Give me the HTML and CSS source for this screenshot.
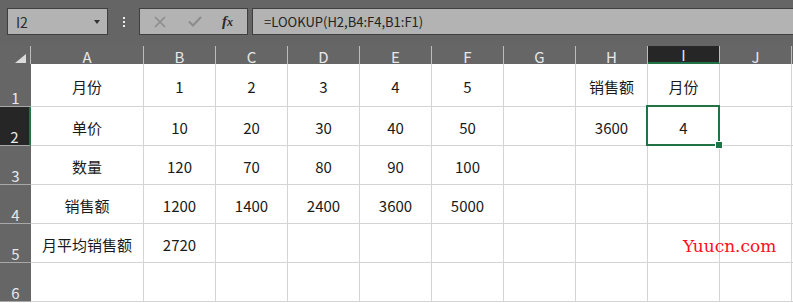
FILE: index.html
```html
<!DOCTYPE html>
<html lang="zh-CN">
<head>
    <meta charset="UTF-8">
    <title>LOOKUP 示例</title>
    <link rel="stylesheet" href="styles.css">
</head>
<body>
    <div class="toolbar">
        <div class="name-box">
            <span>I2</span>
            <span class="caret"></span>
        </div>
        <div class="dots"><i></i><i></i><i></i></div>
        <div class="buttons">
            <svg class="btn-icon" width="12" height="12" viewBox="0 0 12 12">
                <path d="M1 1 L11 11 M11 1 L1 11" stroke="#8c8c8c" stroke-width="1.6" fill="none"/>
            </svg>
            <svg class="btn-icon" width="14" height="11" viewBox="0 0 14 11">
                <path d="M1 5.5 L5 9.5 L13 1" stroke="#8c8c8c" stroke-width="2" fill="none"/>
            </svg>
            <span class="fx">f<small>x</small></span>
        </div>
        <div class="formula">=LOOKUP(H2,B4:F4,B1:F1)</div>
    </div>

    <div class="sheet">
        <!-- header row -->
        <div class="corner"><span class="corner-tri"></span></div>
        <div class="col-head">A</div>
        <div class="col-head">B</div>
        <div class="col-head">C</div>
        <div class="col-head">D</div>
        <div class="col-head">E</div>
        <div class="col-head">F</div>
        <div class="col-head">G</div>
        <div class="col-head">H</div>
        <div class="col-head active">I</div>
        <div class="col-head">J</div>
        <div class="col-head rest"></div>

        <!-- row 1 -->
        <div class="row-head">1</div>
        <div class="cell">月份</div>
        <div class="cell">1</div>
        <div class="cell">2</div>
        <div class="cell">3</div>
        <div class="cell">4</div>
        <div class="cell">5</div>
        <div class="cell"></div>
        <div class="cell">销售额</div>
        <div class="cell">月份</div>
        <div class="cell"></div>
        <div class="cell rest"></div>

        <!-- row 2 -->
        <div class="row-head active">2</div>
        <div class="cell">单价</div>
        <div class="cell">10</div>
        <div class="cell">20</div>
        <div class="cell">30</div>
        <div class="cell">40</div>
        <div class="cell">50</div>
        <div class="cell"></div>
        <div class="cell">3600</div>
        <div class="cell selected">4</div>
        <div class="cell"></div>
        <div class="cell rest"></div>

        <!-- row 3 -->
        <div class="row-head">3</div>
        <div class="cell">数量</div>
        <div class="cell">120</div>
        <div class="cell">70</div>
        <div class="cell">80</div>
        <div class="cell">90</div>
        <div class="cell">100</div>
        <div class="cell"></div>
        <div class="cell"></div>
        <div class="cell"></div>
        <div class="cell"></div>
        <div class="cell rest"></div>

        <!-- row 4 -->
        <div class="row-head">4</div>
        <div class="cell">销售额</div>
        <div class="cell">1200</div>
        <div class="cell">1400</div>
        <div class="cell">2400</div>
        <div class="cell">3600</div>
        <div class="cell">5000</div>
        <div class="cell"></div>
        <div class="cell"></div>
        <div class="cell"></div>
        <div class="cell"></div>
        <div class="cell rest"></div>

        <!-- row 5 -->
        <div class="row-head">5</div>
        <div class="cell">月平均销售额</div>
        <div class="cell">2720</div>
        <div class="cell"></div>
        <div class="cell"></div>
        <div class="cell"></div>
        <div class="cell"></div>
        <div class="cell"></div>
        <div class="cell"></div>
        <div class="cell"></div>
        <div class="cell"></div>
        <div class="cell rest"></div>

        <!-- row 6 -->
        <div class="row-head">6</div>
        <div class="cell"></div>
        <div class="cell"></div>
        <div class="cell"></div>
        <div class="cell"></div>
        <div class="cell"></div>
        <div class="cell"></div>
        <div class="cell"></div>
        <div class="cell"></div>
        <div class="cell"></div>
        <div class="cell"></div>
        <div class="cell rest"></div>

        <div class="watermark">Yuucn.com</div>
    </div>
</body>
</html>
```

FILE: styles.css
```css
/* Basic Reset */
* {
    margin: 0;
    padding: 0;
    box-sizing: border-box;
}

body {
    width: 793px;
    height: 303px;
    overflow: hidden;
    background-color: #656565;
    font-family: "Noto Sans CJK SC", "Noto Sans", sans-serif;
    color: #1a1a1a;
}

/* Top toolbar */
.toolbar {
    display: flex;
    height: 46px;
    padding: 8px 0 0 7px;
    background-color: #656565;
}

.name-box {
    display: flex;
    align-items: center;
    justify-content: space-between;
    width: 101px;
    height: 27px;
    padding: 0 7px 0 8px;
    background-color: #b3b3b3;
    border: 1px solid #3f3f3f;
    font-size: 14px;
    color: #2a2a2a;
}

.caret {
    width: 0;
    height: 0;
    border-left: 3px solid transparent;
    border-right: 3px solid transparent;
    border-top: 4px solid #333;
}

.dots {
    display: flex;
    flex-direction: column;
    align-items: center;
    justify-content: center;
    gap: 2px;
    width: 31px;
    height: 27px;
}

.dots i {
    display: block;
    width: 2px;
    height: 2px;
    background-color: #eee;
}

.buttons {
    display: flex;
    align-items: center;
    width: 109px;
    height: 27px;
    padding-left: 14px;
    background-color: #b3b3b3;
    border: 1px solid #3f3f3f;
}

.btn-icon {
    display: block;
}

.btn-icon + .btn-icon {
    margin-left: 22px;
}

.fx {
    margin-left: 20px;
    font-family: "Liberation Serif", serif;
    font-style: italic;
    font-weight: bold;
    font-size: 15px;
    color: #2a2a2a;
}

.fx small {
    font-size: 12px;
}

.formula {
    flex: 1;
    height: 27px;
    margin-left: 4px;
    padding-left: 11px;
    line-height: 25px;
    background-color: #b3b3b3;
    border: 1px solid #3f3f3f;
    border-right: none;
    font-size: 13px;
    color: #222;
}

/* Sheet grid */
.sheet {
    position: relative;
    display: grid;
    grid-template-columns: 31px 113px repeat(9, 72px) 1fr;
    grid-template-rows: 18px 43px repeat(5, 39px) 1fr;
    height: 257px;
    background-color: #fff;
}

.corner,
.col-head,
.row-head {
    background-color: #666;
    color: #e8e8e8;
    font-family: "Noto Sans CJK SC", sans-serif;
    font-size: 15px;
}

.corner {
    position: relative;
    border-right: 1px solid #bdbdbd;
}

.corner-tri {
    position: absolute;
    right: 4px;
    bottom: 1px;
    width: 0;
    height: 0;
    border-left: 11px solid transparent;
    border-bottom: 9px solid #dcdcdc;
}

.col-head {
    display: flex;
    align-items: flex-end;
    justify-content: center;
    line-height: 15px;
    border-right: 1px solid #bdbdbd;
}

.col-head.active {
    background-color: #262626;
    border-bottom: 2px solid #217346;
}

.col-head.rest {
    border-right: none;
}

.row-head {
    display: flex;
    align-items: flex-end;
    justify-content: center;
    padding-bottom: 1px;
    line-height: 15px;
    border-bottom: 1px solid #a8a8a8;
}

.row-head.active {
    background-color: #262626;
    border-right: 2px solid #217346;
}

.cell {
    display: flex;
    align-items: center;
    justify-content: center;
    padding-top: 3px;
    font-size: 15px;
    border-right: 1px solid #d4d4d4;
    border-bottom: 1px solid #d4d4d4;
}

.cell.rest {
    border-right: none;
}

/* Active cell outline */
.cell.selected {
    position: relative;
}

.cell.selected::before {
    content: "";
    position: absolute;
    left: -2px;
    top: -2px;
    right: -1px;
    bottom: -1px;
    border: 2px solid #217346;
}

.cell.selected::after {
    content: "";
    position: absolute;
    right: -4px;
    bottom: -4px;
    width: 6px;
    height: 6px;
    background-color: #217346;
    border: 1px solid #fff;
}

.watermark {
    position: absolute;
    left: 683px;
    top: 190px;
    font-family: "DejaVu Serif", serif;
    font-size: 17px;
    color: #ff1020;
}
```
